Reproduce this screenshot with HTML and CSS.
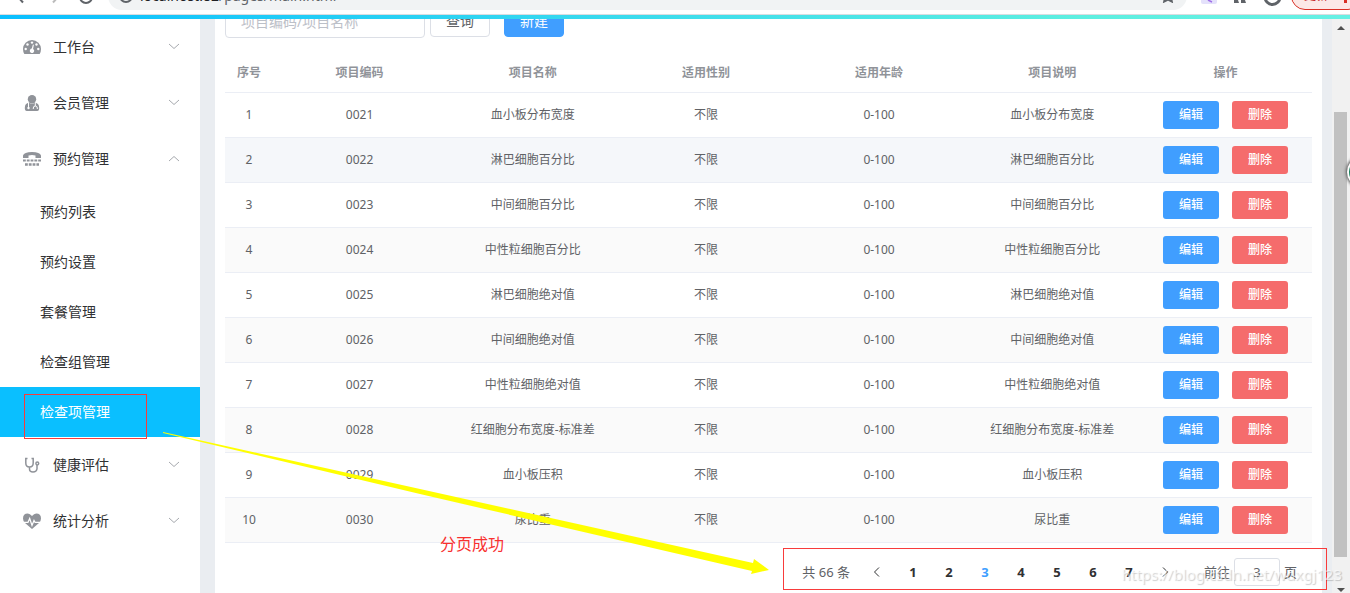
FILE: index.html
```html
<!DOCTYPE html>
<html lang="zh-CN">
<head>
<meta charset="utf-8">
<title>检查项管理</title>
<link rel="stylesheet" href="styles.css">
</head>
<body>
<header class="browser">
  <div class="browser-nav">
    <svg width="100" height="14" viewBox="0 0 100 14" fill="none" stroke="#5f6368" stroke-width="2"><path d="M18-3l5 5.500"/><path d="M58-3l-5 5.500" stroke="#bbb"/><path d="M80-3a6 6 0 0 0 12 0"/></svg>
  </div>
  <div class="address">
    <svg width="16" height="16" viewBox="0 0 16 16" fill="none" stroke="#5f6368" stroke-width="2"><circle cx="8" cy="8" r="6"/></svg>
    <span class="url"><b>localhost:82</b>/pages/main.html</span>
    <svg class="star" width="14" height="14" viewBox="0 0 14 14" fill="none" stroke="#5f6368" stroke-width="2"><path d="M7 1l2 4 4 .5-3 3 .8 4L7 10.500l-3.800 2 .8-4-3-3L5 5z"/></svg>
  </div>
  <div class="browser-tools">
    <svg width="90" height="8" viewBox="0 0 90 8"><path fill="#e4e1fb" d="M0 0h16v2q0 2-2 2H2q-2 0-2-2z"/><path d="M7 0l4 2" stroke="#a070e8" stroke-width="1.500"/><path fill="#5f6368" d="M33 0h4l1 3h-5zM40 0h4l1 3h-5z"/><path d="M64-3a7.500 7.500 0 0 0 15 0" fill="none" stroke="#5f6368" stroke-width="3"/></svg>
  </div>
  <button class="update" type="button">更新 <i class="dots"></i></button>
</header>
<div class="topline"></div>
<div class="app">
  <nav class="sidebar">
    <a class="menu" href="#"><svg class="icon" viewBox="0 0 18 16"><path fill="#909399" d="M9 1a9 9 0 0 0-9 9q0 2.700 1.300 5h15.400Q18 12.700 18 10a9 9 0 0 0-9-9z"/><g fill="#fff"><circle cx="9" cy="3.600" r="1.200"/><circle cx="4.500" cy="5.500" r="1.200"/><circle cx="13.500" cy="5.500" r="1.200"/><circle cx="2.700" cy="10" r="1.200"/><circle cx="15.300" cy="10" r="1.200"/><path d="M9.900 5.500l1 .3-.8 4.100a2.200 2.200 0 1 1-1.300-.3z"/></g></svg><span>工作台</span><svg class="chev" viewBox="0 0 12 8"><path d="M1 1l5 4.500L11 1"/></svg></a>
    <a class="menu" href="#"><svg class="icon" viewBox="0 0 18 16"><g fill="#909399"><circle cx="9" cy="4.200" r="4.200"/><path d="M1.800 13q0-5 4.200-5.300 3 2 6 0 4.200.3 4.200 5.300 0 3-2 3H3.800q-2 0-2-3z"/></g><path d="M5.500 8v4M12.300 8v3M10.300 14v-1q0-2 2-2t2 2v1" fill="none" stroke="#fff"/><circle cx="5.500" cy="13" r="1.200" fill="#fff"/></svg><span>会员管理</span><svg class="chev" viewBox="0 0 12 8"><path d="M1 1l5 4.500L11 1"/></svg></a>
    <a class="menu" href="#"><svg class="icon" viewBox="0 0 18 16"><path fill="#909399" d="M0 7V4.500Q1 1 9 1t9 3.500V7h-5.500V4.500Q9 3.500 5.500 4.500V7z"/><path d="M0 9.500h18" stroke="#909399" stroke-width="2" stroke-dasharray="2.800 1"/><path d="M2 13.500h14" stroke="#909399" stroke-width="2.500" stroke-dasharray="2.800 1"/></svg><span>预约管理</span><svg class="chev" viewBox="0 0 12 8"><path d="M1 6l5-4.500L11 6"/></svg></a>
    <div class="submenu">
      <a href="#">预约列表</a>
      <a href="#">预约设置</a>
      <a href="#">套餐管理</a>
      <a href="#">检查组管理</a>
      <a class="active" href="#">检查项管理</a>
    </div>
    <a class="menu" href="#"><svg class="icon" viewBox="0 0 18 16"><g fill="none" stroke="#909399" stroke-width="1.500"><path d="M4.500 1.500H2.800V6q0 4 3.700 4t3.700-4V1.500H8.500M6.500 10v2q0 3 3.500 3t4-3V8"/><circle cx="14.300" cy="6.500" r="1.400"/></g></svg><span>健康评估</span><svg class="chev" viewBox="0 0 12 8"><path d="M1 1l5 4.500L11 1"/></svg></a>
    <a class="menu" href="#"><svg class="icon" viewBox="0 0 18 16"><path fill="#909399" d="M9 3Q7 .5 4.800.5 0 .5 0 5.500 0 8 2 10l7 6 7-6q2-2 2-4.500Q18 .5 13.200.5 11 .5 9 3z"/><path d="M1 9.300h4l1.700-3.800 2.300 7 2-5 1 1.800h5" fill="none" stroke="#fff" stroke-width="1.200"/></svg><span>统计分析</span><svg class="chev" viewBox="0 0 12 8"><path d="M1 1l5 4.500L11 1"/></svg></a>
  </nav>
  <main class="content">
    <section class="card">
      <form class="filter">
        <input class="query" type="text" placeholder="项目编码/项目名称" aria-label="项目编码/项目名称">
        <button class="btn" type="button">查询</button>
        <button class="btn btn-new" type="button">新建</button>
      </form>
      <table class="grid">
        <thead><tr><th class="num">序号</th><th>项目编码</th><th>项目名称</th><th>适用性别</th><th>适用年龄</th><th>项目说明</th><th>操作</th></tr></thead>
        <tbody>
          <tr><td>1</td><td>0021</td><td>血小板分布宽度</td><td>不限</td><td>0-100</td><td>血小板分布宽度</td><td><div class="ops"><button type="button">编辑</button><button class="del" type="button">删除</button></div></td></tr>
          <tr class="hover"><td>2</td><td>0022</td><td>淋巴细胞百分比</td><td>不限</td><td>0-100</td><td>淋巴细胞百分比</td><td><div class="ops"><button type="button">编辑</button><button class="del" type="button">删除</button></div></td></tr>
          <tr><td>3</td><td>0023</td><td>中间细胞百分比</td><td>不限</td><td>0-100</td><td>中间细胞百分比</td><td><div class="ops"><button type="button">编辑</button><button class="del" type="button">删除</button></div></td></tr>
          <tr><td>4</td><td>0024</td><td>中性粒细胞百分比</td><td>不限</td><td>0-100</td><td>中性粒细胞百分比</td><td><div class="ops"><button type="button">编辑</button><button class="del" type="button">删除</button></div></td></tr>
          <tr><td>5</td><td>0025</td><td>淋巴细胞绝对值</td><td>不限</td><td>0-100</td><td>淋巴细胞绝对值</td><td><div class="ops"><button type="button">编辑</button><button class="del" type="button">删除</button></div></td></tr>
          <tr><td>6</td><td>0026</td><td>中间细胞绝对值</td><td>不限</td><td>0-100</td><td>中间细胞绝对值</td><td><div class="ops"><button type="button">编辑</button><button class="del" type="button">删除</button></div></td></tr>
          <tr><td>7</td><td>0027</td><td>中性粒细胞绝对值</td><td>不限</td><td>0-100</td><td>中性粒细胞绝对值</td><td><div class="ops"><button type="button">编辑</button><button class="del" type="button">删除</button></div></td></tr>
          <tr><td>8</td><td>0028</td><td>红细胞分布宽度-标准差</td><td>不限</td><td>0-100</td><td>红细胞分布宽度-标准差</td><td><div class="ops"><button type="button">编辑</button><button class="del" type="button">删除</button></div></td></tr>
          <tr><td>9</td><td>0029</td><td>血小板压积</td><td>不限</td><td>0-100</td><td>血小板压积</td><td><div class="ops"><button type="button">编辑</button><button class="del" type="button">删除</button></div></td></tr>
          <tr><td>10</td><td>0030</td><td>尿比重</td><td>不限</td><td>0-100</td><td>尿比重</td><td><div class="ops"><button type="button">编辑</button><button class="del" type="button">删除</button></div></td></tr>
        </tbody>
      </table>
      <div class="pager">
        <span class="total">共 66 条</span>
        <button type="button" aria-label="上一页"><svg width="8" height="12" viewBox="0 0 8 12"><path d="M6 1.500L1.500 6 6 10.500"/></svg></button>
        <button type="button">1</button><button type="button">2</button><button class="current" type="button">3</button><button type="button">4</button><button type="button">5</button><button type="button">6</button><button type="button">7</button>
        <button type="button" aria-label="下一页"><svg width="8" height="12" viewBox="0 0 8 12"><path d="M2 1.500L6.500 6 2 10.500"/></svg></button>
        <label class="jump">前往<input type="text" value="3">页</label>
      </div>
    </section>
  </main>
  <div class="scrollbar"><i class="up"></i><i class="thumb"></i><i class="down"></i></div>
</div>
<div class="float-ball"></div>
<div class="mark mark-menu"></div>
<div class="mark mark-pager"></div>
<svg class="arrow" width="610" height="146" viewBox="0 0 610 146"><path fill="#ff0" d="M0 0L257 57 590 131 591 127 606 138 588 142 589 139 257 62 0 1z"/></svg>
<div class="note">分页成功</div>
<div class="watermark">https://blog.csdn.net/wdxgj123</div>
</body>
</html>
```
FILE: styles.css
```css
* { box-sizing: border-box; }
body {
  margin: 0;
  height: 100vh;
  overflow: hidden;
  position: relative;
  display: flex;
  flex-direction: column;
  background: #fff;
  color: #606266;
  font: 12px/20px "Noto Sans", "Noto Sans CJK SC", sans-serif;
}
a { color: inherit; text-decoration: none; }
button, input { font: inherit; }

.browser {
  flex: none;
  display: flex;
  align-items: flex-start;
  height: 15px;
  overflow: hidden;
  border-bottom: 1px solid #dadce0;
}
.browser-nav { width: 108px; height: 14px; }
.address {
  flex: 1;
  display: flex;
  align-items: center;
  height: 28px;
  margin-top: -18px;
  padding: 0 12px 0 10px;
  gap: 6px;
  border-radius: 14px;
  background: #f1f3f4;
  font-size: 14px;
  color: #5f6368;
}
.url { flex: 1; }
.url b { font-weight: 400; color: #202124; }
.browser-tools { width: 90px; margin: 0 0 0 14px; display: flex; }
.update {
  width: 71px;
  height: 28px;
  margin: -18px -12px 0 0;
  padding: 0 14px 0 12px;
  display: flex;
  align-items: center;
  justify-content: space-between;
  border: 1px solid #d93025;
  border-radius: 14px;
  background: #fce8e6;
  color: #c5221f;
}
.dots { width: 3px; height: 13px; border-bottom: 3px solid #d93025; }
.topline { flex: none; height: 4px; background: linear-gradient(90deg, #0abfff, #5eefe0 80%, #67f0e4); }

.app { flex: 1; min-height: 0; display: flex; overflow: hidden; background: #eaedf1; }
.sidebar { flex: none; width: 200px; background: #fff; font-size: 14px; color: #303133; }
.menu { display: flex; align-items: center; height: 56px; padding: 0 20px 0 23px; }
.menu span { flex: 1; margin-left: 12px; }
.icon { width: 18px; height: 16px; }
.chev { width: 12px; height: 8px; fill: none; stroke: #a6a9ae; }
.submenu a { display: flex; align-items: center; height: 50px; padding-left: 40px; }
.submenu .active { background: #0abfff; color: #fff; }

.content { flex: 1; padding: 0 10px 0 15px; }
.card { display: flow-root; height: 100%; padding: 0 10px; background: #fff; }
.filter { display: flex; align-items: flex-start; height: 34px; margin-top: -15px; }
.query { width: 200px; height: 34px; padding: 0 15px; border: 1px solid #dcdfe6; border-radius: 4px; font-size: 14px; }
.query::placeholder { color: #bcc0c8; }
.btn {
  width: 60px;
  height: 33px;
  margin-left: 5px;
  padding: 0;
  border: 1px solid #dcdfe6;
  border-radius: 4px;
  background: #fff;
  color: #606266;
  font-size: 14px;
}
.btn-new { margin-left: 14px; border-color: #409eff; background: #409eff; color: #fff; }

.grid { width: 100%; margin-top: 15px; table-layout: fixed; border-collapse: separate; border-spacing: 0; text-align: center; }
.grid th, .grid td { padding: 0; border-bottom: 1px solid #ebeef5; }
.grid th { height: 40px; font-weight: 700; color: #909399; }
.grid td { height: 45px; }
.num { width: 48px; }
.grid tbody tr:nth-child(even) { background: #fafafa; }
.grid tbody tr.hover { background: #f5f7fa; }
.ops { display: flex; justify-content: center; gap: 13px; }
.ops button { width: 56px; height: 28px; padding: 0; border: 0; border-radius: 3px; background: #409eff; color: #fff; font-weight: 500; }
.ops .del { background: #f56c6c; }

.pager { display: flex; align-items: center; justify-content: flex-end; height: 28px; margin-top: 15px; padding-right: 15px; font-size: 13px; }
.total { margin-right: 9px; }
.pager button { width: 36px; height: 28px; padding: 0; border: 0; background: none; color: #303133; font-weight: 700; }
.pager button svg { display: block; margin: 0 auto; fill: none; stroke: #303133; }
.pager .current { color: #409eff; }
.jump { display: flex; align-items: center; margin-left: 21px; }
.jump input { width: 46px; height: 28px; margin: 0 4px; border: 1px solid #dcdfe6; border-radius: 3px; text-align: center; color: #606266; }

.scrollbar { flex: none; width: 18px; display: flex; flex-direction: column; align-items: center; padding: 7px 3px 1px 2px; background: #f1f1f1; }
.up, .down { border: 4px solid transparent; height: 0; }
.up { border-top: 0; border-bottom-color: #505050; }
.down { border-bottom: 0; border-top-color: #505050; }
.thumb { flex: 1; width: 13px; margin: 82px 0 31px; background: #c1c1c1; }

.float-ball { position: absolute; right: -29px; top: 156px; width: 32px; height: 32px; border: 2px solid #fff; border-radius: 50%; background: #16805c; box-shadow: 0 0 3px 1px #555; }
.mark { position: absolute; border: 1px solid #f83b3b; }
.mark-menu { left: 24px; top: 394px; width: 123px; height: 45px; }
.mark-pager { left: 783px; top: 548px; width: 544px; height: 42px; }
.arrow { position: absolute; left: 163px; top: 432px; }
.note { position: absolute; left: 440px; top: 532px; font-size: 16px; line-height: 24px; color: #f8312f; }
.watermark { position: absolute; right: 8px; top: 562px; font-size: 15px; line-height: 24px; color: rgba(255, 255, 255, .6); text-shadow: 1px 1px 1px rgba(0, 0, 0, .2); }
```
